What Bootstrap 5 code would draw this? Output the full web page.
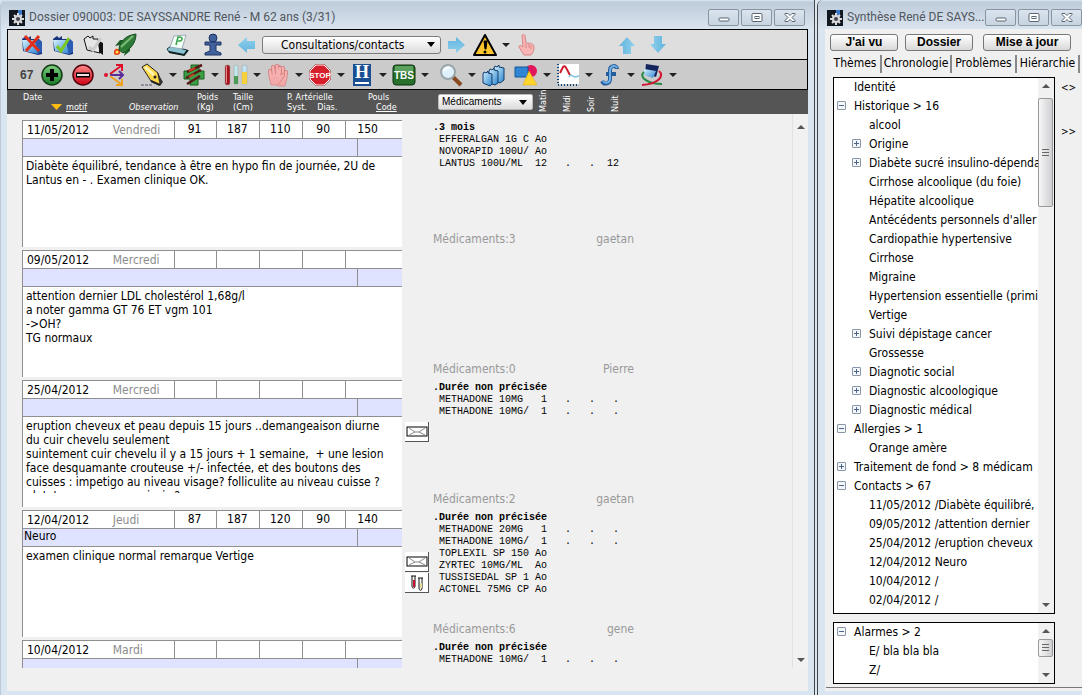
<!DOCTYPE html>
<html lang="fr">
<head>
<meta charset="utf-8">
<meta name="viewport" content="width=device-width, initial-scale=1">
<title>Dossier 090003</title>
<link rel="stylesheet" href="https://cdn.jsdelivr.net/npm/bootstrap@5.3.0/dist/css/bootstrap.min.css">
<style>
  body { font: 12px/14px "DejaVu Sans Condensed", "Noto Sans", sans-serif; color: #000; background: #dbe6f1; }
  svg { display: block; }
  .win { border-left: 1px solid #5d6670; border-radius: 6px 0 0 0; background: #d9e5f0; padding-left: 7px; }
  .win-left { border-right: 1px solid #444; padding-left: 6px; padding-right: 6px; border-left-color: #b9c9d8; }
  .side { width: 265px; margin-left: 2px; border-left-color: #444; }
  .titlebar { height: 29px; padding-top: 6px; margin-left: -7px; padding-left: 9px; color: #50565e; background: linear-gradient(#dfe8f1 0, #becbd9 2px, #d9e4ef 29px); }
  .win-left .titlebar { margin-right: -6px; padding-right: 9px; }
  .side .titlebar { padding-right: 0; }
  .titlebar h1 { font: 400 12px/16px Roboto, sans-serif; margin: 3px 0 0; }
  .capbtn { width: 31px; height: 17px; padding: 0; margin-top: 3px; border: 1px solid #8995a3; border-radius: 2px; background: linear-gradient(#dbe4ee, #c7d3e0); display: grid; place-items: center; }
  .caps { gap: 2px; }
  .plain { border: 0; padding: 0; background: none; }
  .ico { width: 24px; height: 24px; }
  .ico svg { width: 24px; height: 24px; }
  .gap-ico { gap: 7px; }
  .car { width: 18px; height: 24px; display: grid; place-items: center; }
  .car::before, .dn::before, .up::before { content: ""; border: 4px solid transparent; border-top-color: #222; border-bottom: 0; }
  .dn::before { border-width: 4px 4px 0; border-top-color: #555; }
  .up::before { border: 4px solid transparent; border-bottom: 4px solid #555; border-top: 0; }
  .frame { border: solid #000; border-width: 1px 1px 0; }
  .bar1 { height: 30px; background: #dedede; border-bottom: 1px solid #000; padding-left: 12px; }
  .bar2 { height: 30px; background: #cbcbcb; border-bottom: 1px solid #000; padding-left: 12px; }
  .count { width: 20px; color: #444; font: bold 12px/14px "Liberation Sans", sans-serif; }
  .drop { appearance: none; border: 1px solid #7c7c7c; border-radius: 3px; color: #000;
    background: url("data:image/svg+xml,%3Csvg xmlns='http://www.w3.org/2000/svg' width='8' height='5'%3E%3Cpath d='M0 0h8L4 5z'/%3E%3C/svg%3E") no-repeat right 5px center, linear-gradient(#fff, #dcdcdc); }
  .drop-main { width: 179px; height: 18px; padding: 0 18px; font-size: 12px; line-height: 14px; }
  .drop-med { width: 95px; height: 16px; padding: 0 3px; font: 10px/12px "Liberation Sans", sans-serif; border-radius: 2px; border-color: #bbb; }
  .heads { height: 24px; background: #555; color: #fff; padding-left: 16px; margin: 0 -1px; font: 9px/10px "DejaVu Sans Condensed", sans-serif; }
  .heads a { color: #fff; }
  .h-date { width: 106px; padding-top: 2px; }
  .h-obs { width: 68px; padding-top: 12px; font-style: italic; }
  .h-poids { width: 36px; padding-top: 2px; }
  .h-taille { width: 54px; padding-top: 2px; }
  .h-pa { width: 81px; padding-top: 2px; }
  .h-pouls { width: 70px; padding-top: 2px; }
  .h-sel { width: 98px; padding-top: 4px; }
  .vert { width: 24px; height: 24px; writing-mode: vertical-rl; rotate: 180deg; line-height: 14px; padding-top: 2px; white-space: nowrap; }
  .tri { width: 11px; height: 6px; background: #fb1; clip-path: polygon(0 0, 100% 0, 50% 100%); }
  .motif { padding-left: 28px; }
  .content { background: #f0f0f0; padding: 6px 0 23px 15px; min-height: 0; }
  .entry { height: 130px; }
  .visit { width: 380px; height: 127px; background: #fff; border: solid #8f8f8f; border-width: 1px 0 0 1px; }
  .line1 { height: 18px; border-bottom: 1px solid #8f8f8f; }
  .dt { width: 90px; padding: 2px 0 0 4px; }
  .dy { width: 61px; padding-top: 2px; color: #8c8c8c; }
  .num { width: 43px; border-left: 1px solid #8f8f8f; text-align: center; padding: 1px 2px 0 0; }
  .num:last-child { width: 57px; padding-right: 13px; }
  .line2 { height: 18px; background: #dfe3ff; border-bottom: 1px solid #8f8f8f; padding-left: 1px; }
  .line2 span:last-child { width: 45px; border-left: 1px solid #8f8f8f; }
  .note { width: 100%; height: 76px; border: 0; resize: none; overflow: hidden; padding: 2px 4px 0 3px; background: #fff; color: #000; font: inherit; display: block; }
  .flags { width: 31px; padding: 42px 0 0 3px; }
  .flag { width: 24px; height: 20px; background: #fff; border: solid #555; border-width: 0 1px 1px 0; margin-bottom: 1px; padding: 0; display: grid; place-items: center; }
  .meds { width: 201px; color: #999; }
  .meds pre { font: 10px/12px "Liberation Mono", monospace; height: 112px; padding-top: 2px; margin: 0; color: #000; overflow: visible; }
  .sb { width: 16px; border-left: 1px solid #e2e2e2; background: #f1f1f1; margin-top: -6px; padding: 5px 0 0; }
  .sb .plain, .tsb .plain { width: 15px; height: 16px; display: grid; place-items: center; }
  .act { width: 68px; height: 17px; border: 1px solid #777; border-radius: 3px; background: linear-gradient(#fff, #d8d8d8); font: bold 12px/13px "Liberation Sans", sans-serif; padding: 0; color: #000; }
  .act-wide { width: 88px; margin-left: 3px; }
  .side-body { background: #f0f0f0; padding: 5px 0 3px 5px; min-height: 0; }
  .tabs a { color: #000; text-decoration: none; border-right: 2px solid #888; height: 18px; line-height: 17px; padding: 0; text-align: center; white-space: nowrap; }
  .t1 { width: 52px; } .t2 { width: 70px; } .t3 { width: 65px; } .t4 { width: 63px; }
  .pane { margin: 4px 0 8px 3px; min-height: 0; }
  .box { border: 1px solid #000; background: #fff; width: 222px; }
  .tree { list-style: none; margin: 0; padding: 0; min-width: 0; }
  .tree li { height: 19px; line-height: 19px; padding-left: 3px; white-space: nowrap; display: flex; }
  .tree li.sub { padding-left: 18px; }
  .tree li > span { margin-left: 17px; }
  .pm { flex: 0 0 9px; height: 9px; margin: 4px 8px 0 0; padding: 0; border: 1px solid #8796a8; border-radius: 1px; background: linear-gradient(#4a648c, #4a648c) center / 5px 1px no-repeat, #f4f6f8; }
  .pm.plus { background: linear-gradient(#4a648c, #4a648c) center / 5px 1px no-repeat, linear-gradient(#4a648c, #4a648c) center / 1px 5px no-repeat, #f4f6f8; }
  .tsb { width: 16px; background: #f1f1f1; }
  .thumb { width: 15px; height: 18px; border: 1px solid #999; border-radius: 2px; background: linear-gradient(90deg, #f6f6f6, #d0d0d4); display: grid; place-items: center; }
  .thumb.tall { height: 109px; }
  .thumb::before { content: ""; width: 7px; height: 8px; background: repeating-linear-gradient(#666 0 1px, transparent 1px 3px); }
  .alarm { height: 62px; margin-left: 3px; }
  .base { border-bottom: 1px solid #777; margin: 3px 0 0 -4px; }
  .nav2 { width: 27px; gap: 30px; font-size: 10px; }
</style>
</head>
<body class="d-flex vh-100 overflow-hidden">

<svg width="0" height="0" class="position-absolute" aria-hidden="true">
  <defs>
    <linearGradient id="gb" x2="1" y2="1"><stop stop-color="#d8f2ff"/><stop offset="1" stop-color="#2c86cf"/></linearGradient>
    <linearGradient id="ga" x2="0" y2="1"><stop stop-color="#8fd0ee"/><stop offset="1" stop-color="#63b4dd"/></linearGradient>
    <linearGradient id="gg" x2="0" y2="1"><stop stop-color="#7fd07f"/><stop offset="1" stop-color="#157a25"/></linearGradient>
    <linearGradient id="gr" x2="0" y2="1"><stop stop-color="#ff8a8a"/><stop offset="1" stop-color="#cf0014"/></linearGradient>
    <symbol id="gear" viewBox="0 0 16 16"><rect width="16" height="16" fill="#111820"/><path d="M9 0h4v6H9z" fill="#3a76c8"/><g stroke="#ddd" stroke-width="2"><path d="M9 3v12M3 9h12M5 5l8 8M13 5l-8 8"/></g><circle cx="9" cy="9" r="4" fill="#d8d8d8"/><circle cx="9" cy="9" r="2" fill="#445"/></symbol>
    <symbol id="folder" viewBox="0 0 24 24"><path d="M2 6l4-3 2 2 3-2v3h8l3 3v12l-4 1L3 18z" fill="#17337c"/><path d="M2 7h13l3 14-14-3z" fill="url(#gb)"/><path d="M15 8l3 13 4-2V9l-4-3z" fill="#2a5cb4"/></symbol>
    <symbol id="arrow" viewBox="0 0 24 24"><path d="M4 12l9-8v4h8v8h-8v4z" fill="url(#ga)"/></symbol>
    <symbol id="env" viewBox="0 0 22 12"><rect x="1" y="1" width="20" height="9" fill="#fff" stroke="#000"/><path d="M3 2l6 4h4l6-4M3 9l6-3M19 9l-6-3" fill="none" stroke="#888"/></symbol>
    <symbol id="hand" viewBox="0 0 24 24"><g stroke-linecap="round" fill="none"><path d="M4 8l1 7M7 4l1 9M11 3v10M14 5l-1 8M17 12l-3 4" stroke="#d27676" stroke-width="4"/></g><path d="M3 13c2-2 8-3 12-1l1 4-4 6H5z" fill="#f3a9a9" stroke="#d27676" stroke-width=".6"/><g stroke-linecap="round" fill="none"><path d="M4 8l1 7M7 4l1 9M11 3v10M14 5l-1 8M17 12l-3 4" stroke="#f5b0b0" stroke-width="2.600"/></g></symbol>
    <symbol id="min" viewBox="0 0 12 9"><rect x="1" y="5" width="10" height="3" rx="1" fill="#fff" stroke="#596572"/></symbol>
    <symbol id="max" viewBox="0 0 12 9"><rect x="1" y=".5" width="10" height="8" rx="1" fill="#fff" stroke="#596572"/><rect x="4" y="3.500" width="4" height="2" fill="#fff" stroke="#596572"/></symbol>
    <symbol id="cls" viewBox="0 0 12 9"><path d="M1 .5h3l2 2 2-2h3v1l-3 3 3 3v1H8l-2-2-2 2H1v-1l3-3-3-3z" fill="#fff" stroke="#596572"/></symbol>
  </defs>
</svg>

<main class="win win-left flex-grow-1 d-flex flex-column overflow-hidden pb-1">
  <header class="titlebar d-flex flex-shrink-0">
    <svg width="16" height="16" class="me-1 mt-1"><use href="#gear"/></svg>
    <h1 class="flex-grow-1">Dossier 090003: DE SAYSSANDRE René - M 62 ans (3/31)</h1>
    <div class="caps d-flex">
      <button class="capbtn" aria-label="Réduire"><svg width="12" height="9"><use href="#min"/></svg></button>
      <button class="capbtn" aria-label="Agrandir"><svg width="12" height="9"><use href="#max"/></svg></button>
      <button class="capbtn" aria-label="Fermer"><svg width="12" height="9"><use href="#cls"/></svg></button>
    </div>
  </header>

  <div class="frame flex-shrink-0">
    <div class="bar1 d-flex align-items-center">
      <div class="d-flex gap-ico">
        <button class="plain ico" aria-label="Fermer dossier"><svg><use href="#folder"/><path d="M5 3l14 15M19 3L6 18" stroke="#e0301c" stroke-width="3"/></svg></button>
        <button class="plain ico" aria-label="Valider"><svg><use href="#folder"/><path d="M6 13l4 5 8-13" stroke="#7bc621" stroke-width="3" fill="none"/></svg></button>
        <button class="plain ico" aria-label="Dossier inactif"><svg><path d="M2 6l4-3 2 2 3-2v3h5l2 14-13-3z" fill="#e6e6e6" stroke="#111"/><path d="M17 8l4 2v12l-4-3z" fill="#111"/><path d="M7 14l4 3 8-12" stroke="#ccc" stroke-width="3" fill="none"/></svg></button>
        <button class="plain ico" aria-label="Fusée"><svg><path d="M1 22l2-7 5 5z" fill="#f7a510"/><circle cx="4" cy="19" r="3" fill="#e33a12"/><circle cx="4" cy="19" r="1.500" fill="#ffe04b"/><path d="M6 17C6 9 13 2 23 1c0 9-6 16-13 19z" fill="#2d7b37" stroke="#164d1d"/><path d="M8 14L20 3" stroke="#7fbd76" stroke-width="2"/><path d="M7 12l-5 1 5-6h4zM12 19l-1 4 6-5v-4z" fill="#1b5c27"/></svg></button>
      </div>
      <button class="plain ico" style="margin-left:29px" aria-label="Imprimer"><svg><path d="M1 16l4-3 16 4-3 5-15-3z" fill="#8cc3d2" stroke="#1d3541"/><path d="M8 3l12-1-4 14-12-2z" fill="#f2fff4" stroke="#9ab"/><path d="M10 12l2-8c6-1 5 5 0 4" fill="none" stroke="#39a049" stroke-width="1.500"/><path d="M3 19l15 3 4-5" fill="none" stroke="#122" stroke-width="2"/></svg></button>
      <button class="plain ico" style="margin-left:11px" aria-label="Patient"><svg><circle cx="12" cy="5" r="4" fill="#41619d" stroke="#1e3566"/><path d="M4 9h16v3h-5v6l5 2v2H4v-2l5-2v-6H4z" fill="#41619d" stroke="#1e3566"/></svg></button>
      <button class="plain ico" style="margin-left:9px" aria-label="Précédent"><svg><use href="#arrow"/></svg></button>
      <select class="drop drop-main ms-1" aria-label="Vue"><option>Consultations/contacts</option></select>
      <button class="plain ico ms-1" aria-label="Suivant"><svg><g transform="rotate(180 12 12)"><use href="#arrow"/></g></svg></button>
      <button class="plain d-flex ms-1" aria-label="Alerte"><span class="ico"><svg><path d="M12 2l11 20H1z" fill="#ffc52e" stroke="#000" stroke-width="2" stroke-linejoin="round"/><path d="M11 8h3l-1 8h-1z" stroke="#000"/><circle cx="12" cy="19" r="1.500"/></svg></span><span class="car"></span></button>
      <button class="plain ico" aria-label="Pointer"><svg><path d="M9 22L4 14c0-2 2-2 4 0L7 3c0-2 3-2 3 0l1 7c5 0 8 1 8 4s-1 6-3 8z" fill="#f8b5b5" stroke="#db8585"/><path d="M11 11v4M14 11v4M16 12v4" stroke="#db8585"/></svg></button>
      <button class="plain ico" style="margin-left:76px" aria-label="Monter"><svg><g transform="rotate(90 12 12)"><use href="#arrow"/></g></svg></button>
      <button class="plain ico" style="margin-left:7px" aria-label="Descendre"><svg><g transform="rotate(-90 12 12)"><use href="#arrow"/></g></svg></button>
    </div>

    <div class="bar2 d-flex align-items-center">
      <span class="count">67</span>
      <div class="d-flex gap-ico">
        <button class="plain ico" aria-label="Ajouter"><svg><circle cx="12" cy="12" r="10" fill="url(#gg)" stroke="#123c17" stroke-width="1.500"/><path d="M12 6v12M6 12h12" stroke="#000" stroke-width="4"/></svg></button>
        <button class="plain ico" aria-label="Supprimer"><svg><circle cx="12" cy="12" r="10" fill="url(#gr)" stroke="#50000a" stroke-width="1.500"/><path d="M5 12h14" stroke="#000" stroke-width="5"/><path d="M6 12h12" stroke="#f3dede" stroke-width="2"/></svg></button>
        <button class="plain ico" aria-label="Répartir"><svg><circle cx="4" cy="12" r="2" fill="#e0102c"/><g fill="none" stroke-width="2"><path d="M8 11l11-8M14 2h6v6" stroke="#e0102c"/><path d="M8 12h13M17 8l4 4-4 4" stroke="#5a2c96"/><path d="M8 13l11 8M20 16v6h-6" stroke="#eea020"/></g></svg></button>
      </div>
      <button class="plain d-flex" style="margin-left:14px" aria-label="Écrire"><span class="ico"><svg><path d="M2 4l5-3 11 9 3 9-2 3-8-4z" fill="#ffd84a" stroke="#222"/><path d="M5 4l9 8" stroke="#fff4b5" stroke-width="3"/><path d="M17 9l6 10-3 4z" fill="#333"/><path d="M11 18l9 4" stroke="#222" stroke-width="2"/><circle cx="15" cy="14" r="1.500" fill="#222"/><path d="M1 22h12" stroke="#557" stroke-dasharray="3 1"/></svg></span><span class="car"></span></button>
      <button class="plain d-flex" aria-label="Ordonnance"><span class="ico"><svg><path d="M9 2h8v6h5v8h-6v6H8v-6H2V8h7z" fill="#3ba045" stroke="#16601f"/><path d="M5 9l15-7M4 15l15-8M5 21l13-8" stroke="#5a1717" stroke-width="2.500"/><path d="M7 8l6-3M7 14l5-3" stroke="#cf3e27" stroke-width="2"/></svg></span><span class="car"></span></button>
      <button class="plain d-flex" aria-label="Biologie"><span class="ico"><svg><g stroke="#999" stroke-width=".5"><rect x="1" y="2" width="5" height="20" rx="2" fill="#a5121c"/><rect x="10" y="2" width="4" height="20" rx="2" fill="#bfe8ef"/><rect x="18" y="2" width="5" height="20" rx="2" fill="#bde2f5"/></g><path d="M10 13h4v8h-4z" fill="#4a9b54"/><path d="M18 9h5v12h-5z" fill="#f7d13b"/><path d="M2.500 3v17" stroke="#e88"/></svg></span><span class="car"></span></button>
      <button class="plain d-flex" aria-label="Examen"><span class="ico"><svg><g transform="translate(24 1) scale(-1 1)"><use href="#hand"/></g><use href="#hand"/></svg></span><span class="car"></span></button>
      <button class="plain d-flex" aria-label="Stop"><span class="ico"><svg><path d="M8 1h8l7 7v8l-7 7H8l-7-7V8z" fill="#911"/><path d="M8 2h8l6 6v8l-6 6H8l-6-6V8z" fill="#d71f2b" stroke="#fff"/><text x="12" y="15" text-anchor="middle" font-family="Liberation Sans" font-weight="700" font-size="8" fill="#fff">STOP</text></svg></span><span class="car"></span></button>
      <button class="plain d-flex" aria-label="Hospitalisation"><span class="ico"><svg><path d="M3 1h18v22H3z" fill="#1b4f93"/><path d="M5 19h14v2H5z" fill="#fff"/><text x="12" y="15" text-anchor="middle" font-family="Liberation Serif" font-weight="700" font-size="18" fill="#fff">H</text></svg></span><span class="car"></span></button>
      <button class="plain d-flex" aria-label="TBS"><span class="ico"><svg><rect x="1" y="2" width="22" height="20" rx="3" fill="#26702b" stroke="#0d330f"/><path d="M3 3h18v6H3z" fill="#5aa25e"/><text x="12" y="16" text-anchor="middle" font-family="Liberation Sans" font-weight="700" font-size="10" fill="#fff">TBS</text></svg></span><span class="car"></span></button>
      <button class="plain d-flex" style="margin-left:5px" aria-label="Rechercher"><span class="ico"><svg><path d="M14 14l8 8" stroke="#8a4a20" stroke-width="4"/><circle cx="9" cy="9" r="7" fill="#dff2fb" stroke="#9aa5ab" stroke-width="2"/><path d="M5 8c1-3 4-4 6-3" stroke="#fff" stroke-width="2" fill="none"/></svg></span><span class="car"></span></button>
      <button class="plain ico" aria-label="Dossiers"><svg><g stroke="#123c6c" fill="url(#gb)"><path d="M13 5l1-2 2 1 2-2v2l5 1v12l-4 3-6-2z"/><path d="M8 8l1-2 2 1 2-2v2l4 1v12l-3 2-6-2z"/><path d="M2 11l1-2 2 1 2-2v2l4 1v10l-2 2-7-3z"/></g></svg></button>
      <button class="plain d-flex" style="margin-left:9px" aria-label="Formes"><span class="ico"><svg><circle cx="17" cy="8" r="6" fill="#e2185d"/><path d="M1 4h13v10H1z" fill="#2f86d4" stroke="#17549b"/><path d="M15 8l8 14H9z" fill="#ffd52e" stroke="#e0a800" stroke-width=".5"/></svg></span><span class="car"></span></button>
      <button class="plain d-flex" aria-label="Courbes"><span class="ico"><svg><path d="M3 1h20v20H3z" fill="#fff"/><path d="M2 1v21h21" fill="none" stroke="#147" stroke-width="2" stroke-dasharray="1 2"/><path d="M4 10l3-6c3-3 4 4 7 8" fill="none" stroke="#d01a2b" stroke-width="2"/><path d="M13 14c2-4 4 0 6 0l4-1" fill="none" stroke="#7cc4e2" stroke-width="1.500"/></svg></span><span class="car"></span></button>
      <button class="plain d-flex" aria-label="Formule"><span class="ico"><svg><path d="M19 6c0-4-7-4-7 1v9c0 5-6 6-8 2M8 11h10" fill="none" stroke="#245c9c" stroke-width="4"/><path d="M19 5c-1-3-6-3-7 2v9c0 4-5 5-7 2" fill="none" stroke="#6fb1e6" stroke-width="2"/></svg></span><span class="car"></span></button>
      <button class="plain d-flex" aria-label="Échange"><span class="ico"><svg><path d="M6 1l13 2-3 11-11-4z" fill="#14245e"/><path d="M4 6l12 2-3 7-9-3z" fill="url(#gb)"/><path d="M4 9c-6 5 4 12 18 12" fill="none" stroke="#2a8a48" stroke-width="2"/><path d="M19 8c6 5-1 13-17 14" fill="none" stroke="#cf1730" stroke-width="2"/></svg></span><span class="car"></span></button>
    </div>

    <div class="heads d-flex">
      <div class="h-date">Date<div class="motif d-flex align-items-center"><span class="tri me-1"></span><a href="#">motif</a></div></div>
      <div class="h-obs">Observation</div>
      <div class="h-poids">Poids<br>(Kg)</div>
      <div class="h-taille">Taille<br>(Cm)</div>
      <div class="h-pa">P. Artérielle<br>Syst. &nbsp; &nbsp;Dias.</div>
      <div class="h-pouls">Pouls<br><a href="#" class="ms-2">Code</a></div>
      <div class="h-sel"><select class="drop drop-med d-block" aria-label="Liste"><option>Médicaments</option></select></div>
      <span class="vert">Matin</span><span class="vert">Midi</span><span class="vert">Soir</span><span class="vert">Nuit</span>
    </div>
  </div>

  <div class="content flex-grow-1 d-flex overflow-hidden">
    <div class="flex-grow-1 overflow-hidden">
      <section class="entry d-flex">
        <div class="visit">
          <div class="line1 d-flex"><span class="dt">11/05/2012</span><span class="dy">Vendredi</span><span class="num">91</span><span class="num">187</span><span class="num">110</span><span class="num">90</span><span class="num">150</span></div>
          <div class="line2 d-flex justify-content-between"><span></span><span></span></div>
          <textarea class="note" aria-label="Observation du 11/05/2012">Diabète équilibré, tendance à être en hypo fin de journée, 2U de
Lantus en - . Examen clinique OK.</textarea>
        </div>
        <div class="flags"></div>
        <div class="meds"><pre><b>.3 mois</b>
 EFFERALGAN 1G C Ao
 NOVORAPID 100U/ Ao
 LANTUS 100U/ML  12   .   .  12</pre><div class="d-flex justify-content-between"><span>Médicaments:3</span><span>gaetan</span></div></div>
      </section>
      <section class="entry d-flex">
        <div class="visit">
          <div class="line1 d-flex"><span class="dt">09/05/2012</span><span class="dy">Mercredi</span><span class="num"></span><span class="num"></span><span class="num"></span><span class="num"></span><span class="num"></span></div>
          <div class="line2 d-flex justify-content-between"><span></span><span></span></div>
          <textarea class="note" aria-label="Observation du 09/05/2012">attention dernier LDL cholestérol 1,68g/l
a noter gamma GT 76 ET vgm 101
-&gt;OH?
TG normaux</textarea>
        </div>
        <div class="flags"></div>
        <div class="meds"><pre></pre><div class="d-flex justify-content-between"><span>Médicaments:0</span><span>Pierre</span></div></div>
      </section>
      <section class="entry d-flex">
        <div class="visit">
          <div class="line1 d-flex"><span class="dt">25/04/2012</span><span class="dy">Mercredi</span><span class="num"></span><span class="num"></span><span class="num"></span><span class="num"></span><span class="num"></span></div>
          <div class="line2 d-flex justify-content-between"><span></span><span></span></div>
          <textarea class="note" aria-label="Observation du 25/04/2012">eruption cheveux et peau depuis 15 jours ..demangeaison diurne
du cuir chevelu seulement
suintement cuir chevelu il y a 15 jours + 1 semaine,  + une lesion
face desquamante crouteuse +/- infectée, et des boutons des
cuisses : impetigo au niveau visage? folliculite au niveau cuisse ?
plutot eczema ou psoriasis ?</textarea>
        </div>
        <div class="flags"><button class="flag" aria-label="Courrier"><svg width="22" height="12"><use href="#env"/></svg></button></div>
        <div class="meds"><pre><b>.Durée non précisée</b>
 METHADONE 10MG   1   .   .   .
 METHADONE 10MG/  1   .   .   .</pre><div class="d-flex justify-content-between"><span>Médicaments:2</span><span>gaetan</span></div></div>
      </section>
      <section class="entry d-flex">
        <div class="visit">
          <div class="line1 d-flex"><span class="dt">12/04/2012</span><span class="dy">Jeudi</span><span class="num">87</span><span class="num">187</span><span class="num">120</span><span class="num">90</span><span class="num">140</span></div>
          <div class="line2 d-flex justify-content-between"><span>Neuro</span><span></span></div>
          <textarea class="note" aria-label="Observation du 12/04/2012">examen clinique normal remarque Vertige</textarea>
        </div>
        <div class="flags"><button class="flag" aria-label="Courrier"><svg width="22" height="12"><use href="#env"/></svg></button><button class="flag" aria-label="Analyses"><svg width="14" height="16"><path d="M1 1h5M2 1v10c0 3 3 3 3 0V1M8 3h5M9 3v10c0 3 3 3 3 0V3" fill="none" stroke="#111"/><path d="M3 5h2v7H3z" fill="#c8102e"/><path d="M10 8h2v5h-2z" fill="#e8dc9a"/></svg></button></div>
        <div class="meds"><pre><b>.Durée non précisée</b>
 METHADONE 20MG   1   .   .   .
 METHADONE 10MG/  1   .   .   .
 TOPLEXIL SP 150 Ao
 ZYRTEC 10MG/ML  Ao
 TUSSISEDAL SP 1 Ao
 ACTONEL 75MG CP Ao</pre><div class="d-flex justify-content-between"><span>Médicaments:6</span><span>gene</span></div></div>
      </section>
      <section class="entry d-flex">
        <div class="visit">
          <div class="line1 d-flex"><span class="dt">10/04/2012</span><span class="dy">Mardi</span><span class="num"></span><span class="num"></span><span class="num"></span><span class="num"></span><span class="num"></span></div>
          <div class="line2 d-flex justify-content-between"><span></span><span></span></div>
        </div>
        <div class="flags"></div>
        <div class="meds"><pre><b>.Durée non précisée</b>
 METHADONE 10MG/  1   .   .   .</pre></div>
      </section>
    </div>
    <div class="sb d-flex flex-column justify-content-between"><button class="plain up" aria-label="Défiler vers le haut"></button><button class="plain dn" aria-label="Défiler vers le bas"></button></div>
  </div>
</main>

<aside class="win side flex-shrink-0 d-flex flex-column overflow-hidden pb-1">
  <header class="titlebar d-flex flex-shrink-0">
    <svg width="16" height="16" class="me-1 mt-1"><use href="#gear"/></svg>
    <h1 class="flex-grow-1 text-nowrap">Synthèse René DE SAYS...</h1>
    <div class="caps d-flex">
      <button class="capbtn" aria-label="Réduire"><svg width="12" height="9"><use href="#min"/></svg></button>
      <button class="capbtn" aria-label="Agrandir"><svg width="12" height="9"><use href="#max"/></svg></button>
      <button class="capbtn" aria-label="Fermer"><svg width="12" height="9"><use href="#cls"/></svg></button>
    </div>
  </header>
  <div class="side-body flex-grow-1 d-flex flex-column">
    <div class="d-flex flex-shrink-0 gap-ico mb-1"><button class="act">J'ai vu</button><button class="act">Dossier</button><button class="act act-wide">Mise à jour</button></div>
    <nav class="tabs d-flex flex-shrink-0"><a href="#" class="t1">Thèmes</a><a href="#" class="t2">Chronologie</a><a href="#" class="t3">Problèmes</a><a href="#" class="t4">Hiérarchie</a></nav>
    <div class="pane flex-grow-1 d-flex">
      <div class="box d-flex">
        <ul class="tree flex-grow-1 overflow-hidden">
          <li><span>Identité</span></li>
          <li><button class="pm" aria-label="Replier"></button>Historique &gt; 16</li>
          <li class="sub"><span>alcool</span></li>
          <li class="sub"><button class="pm plus" aria-label="Déplier"></button>Origine</li>
          <li class="sub"><button class="pm plus" aria-label="Déplier"></button>Diabète sucré insulino-dépenda</li>
          <li class="sub"><span>Cirrhose alcoolique (du foie)</span></li>
          <li class="sub"><span>Hépatite alcoolique</span></li>
          <li class="sub"><span>Antécédents personnels d'aller</span></li>
          <li class="sub"><span>Cardiopathie hypertensive</span></li>
          <li class="sub"><span>Cirrhose</span></li>
          <li class="sub"><span>Migraine</span></li>
          <li class="sub"><span>Hypertension essentielle (primi</span></li>
          <li class="sub"><span>Vertige</span></li>
          <li class="sub"><button class="pm plus" aria-label="Déplier"></button>Suivi dépistage cancer</li>
          <li class="sub"><span>Grossesse</span></li>
          <li class="sub"><button class="pm plus" aria-label="Déplier"></button>Diagnotic social</li>
          <li class="sub"><button class="pm plus" aria-label="Déplier"></button>Diagnostic alcoologique</li>
          <li class="sub"><button class="pm plus" aria-label="Déplier"></button>Diagnostic médical</li>
          <li><button class="pm" aria-label="Replier"></button>Allergies &gt; 1</li>
          <li class="sub"><span>Orange amère</span></li>
          <li><button class="pm plus" aria-label="Déplier"></button>Traitement de fond &gt; 8 médicam</li>
          <li><button class="pm" aria-label="Replier"></button>Contacts &gt; 67</li>
          <li class="sub"><span>11/05/2012 /Diabète équilibré,</span></li>
          <li class="sub"><span>09/05/2012 /attention dernier</span></li>
          <li class="sub"><span>25/04/2012 /eruption cheveux</span></li>
          <li class="sub"><span>12/04/2012 Neuro</span></li>
          <li class="sub"><span>10/04/2012 /</span></li>
          <li class="sub"><span>02/04/2012 /</span></li>
        </ul>
        <div class="tsb d-flex flex-column flex-shrink-0"><button class="plain up" aria-label="Défiler vers le haut"></button><div class="thumb tall mt-1"></div><button class="plain dn mt-auto" aria-label="Défiler vers le bas"></button></div>
      </div>
      <div class="nav2 d-flex flex-column align-items-center pt-1"><button class="plain">&lt;&gt;</button><button class="plain">&gt;&gt;</button></div>
    </div>
    <div class="box alarm d-flex flex-shrink-0">
      <ul class="tree flex-grow-1 overflow-hidden">
        <li><button class="pm" aria-label="Replier"></button>Alarmes &gt; 2</li>
        <li class="sub"><span>E/ bla bla bla</span></li>
        <li class="sub"><span>Z/</span></li>
      </ul>
      <div class="tsb d-flex flex-column flex-shrink-0"><button class="plain up" aria-label="Défiler vers le haut"></button><div class="thumb"></div><button class="plain dn mt-auto" aria-label="Défiler vers le bas"></button></div>
    </div>
    <div class="base"></div>
  </div>
</aside>
<script src="https://cdn.jsdelivr.net/npm/bootstrap@5.3.0/dist/js/bootstrap.bundle.min.js"></script>
</body>
</html>
